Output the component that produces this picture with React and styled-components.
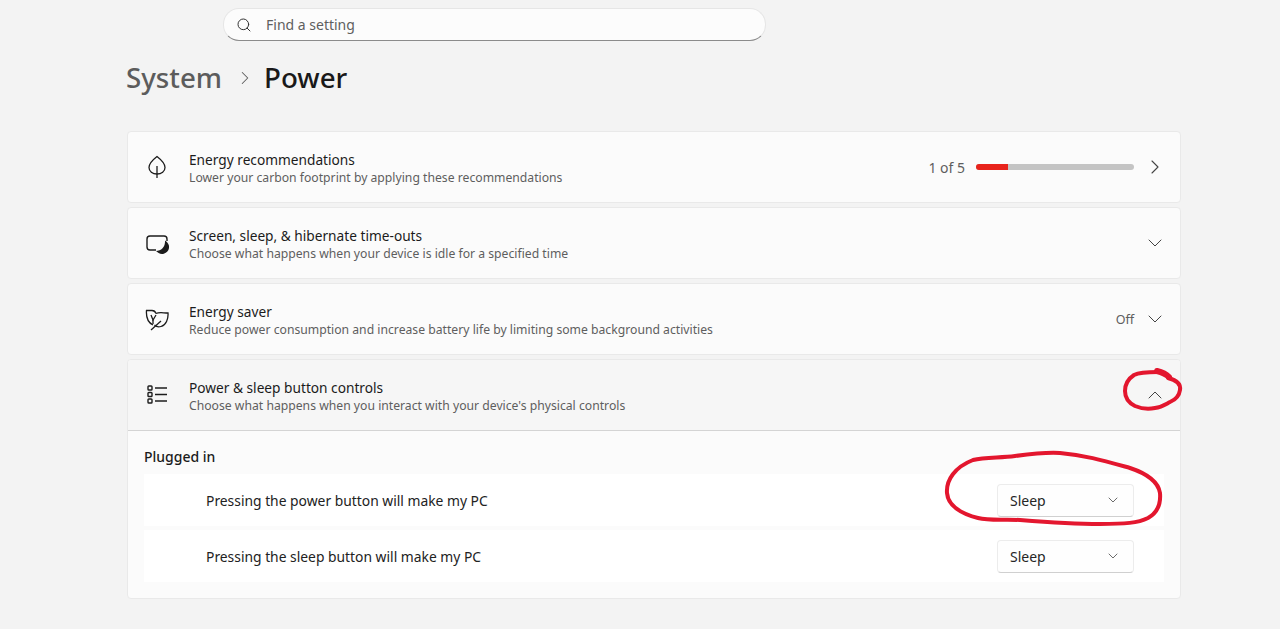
import styled, { createGlobalStyle } from "styled-components";
import { ChevronDown, ChevronRight, ChevronUp, Search } from "lucide-react";

const GlobalStyle = createGlobalStyle`
	html, body {
		margin: 0;
		padding: 0;
		background: #f3f3f3;
	}
	* {
		box-sizing: border-box;
	}
`;

const Page = styled.div`
	position: relative;
	width: 1280px;
	height: 629px;
	overflow: hidden;
	padding: 8px 99px 0 127px;
	background: #f3f3f3;
	font-family: "Noto Sans", "Open Sans", sans-serif;
	color: #1b1b1b;
`;

const SearchBar = styled.div`
	display: flex;
	align-items: center;
	gap: 14px;
	width: 543px;
	height: 33px;
	margin-left: 96px;
	padding-left: 12px;
	background: #fcfcfc;
	border: 1px solid #e6e6e6;
	border-bottom: 1px solid #8b8b8b;
	border-radius: 16px;
	font-size: 14px;
	color: #5f5f5f;
`;

const Breadcrumb = styled.div`
	display: flex;
	align-items: center;
	height: 38px;
	margin-top: 17px;
	margin-left: -1px;
	font-size: 27.7px;
	font-weight: 500;
`;

const Parent = styled.span`
	color: #5c5c5c;
`;

const Current = styled.span`
	color: #191919;
`;

const Crumb = styled.span`
	display: flex;
	margin: 1px 8px 0 12px;
	color: #5c5c5c;
`;

const List = styled.div`
	display: flex;
	flex-direction: column;
	gap: 4px;
	margin-top: 35px;
`;

const Card = styled.div`
	background: #fbfbfb;
	border: 1px solid #e9e9e9;
	border-radius: 4px;
	overflow: hidden;
`;

const CardHead = styled.div`
	display: flex;
	align-items: center;
	height: ${(p) => (p.$open ? "71px" : "70px")};
	padding: 0 13px 0 17px;
	background: ${(p) => (p.$open ? "#f6f6f6" : "transparent")};
	border-bottom: ${(p) => (p.$open ? "1px solid #d4d4d4" : "none")};
`;

const IconSlot = styled.div`
	display: flex;
	align-items: center;
	justify-content: center;
	width: 24px;
	height: 24px;
	margin-right: 20px;
	color: #1c1c1c;
`;

const Labels = styled.div`
	flex: 1;
	min-width: 0;
	padding-top: 3px;
`;

const Title = styled.div`
	font-size: 13.7px;
	line-height: 18px;
	color: #1b1b1b;
`;

const Subtitle = styled.div`
	font-size: 12.2px;
	line-height: 18px;
	color: #5e5e5e;
`;

const Status = styled.span`
	font-size: 14px;
	color: #5e5e5e;
`;

const SmallStatus = styled(Status)`
	font-size: 12.5px;
	margin-right: 9px;
`;

const Track = styled.div`
	width: 158px;
	height: 6px;
	margin: 0 9px 0 11px;
	border-radius: 3px;
	background: #c4c4c4;
	overflow: hidden;
`;

const Fill = styled.div`
	height: 100%;
	background: #e8231c;
`;

const Arrow = styled.span`
	display: flex;
	width: 24px;
	justify-content: center;
	color: #444;
`;

const Panel = styled.div`
	padding: 16px 16px 16px;
`;

const GroupTitle = styled.div`
	font-size: 14px;
	font-weight: 500;
	line-height: 20px;
	margin-bottom: 7px;
	color: #1b1b1b;
`;

const Rows = styled.div`
	display: flex;
	flex-direction: column;
	gap: 4px;
`;

const Row = styled.div`
	display: flex;
	align-items: center;
	justify-content: space-between;
	height: 52px;
	padding: 0 30px 0 62px;
	background: #ffffff;
	font-size: 13.85px;
	color: #222;
`;

const Select = styled.div`
	display: flex;
	align-items: center;
	justify-content: space-between;
	width: 137px;
	height: 33px;
	padding: 0 12px 0 12px;
	background: #fefefe;
	border: 1px solid #ececec;
	border-bottom-color: #d0d0d0;
	border-radius: 4px;
	font-size: 14px;
	color: #262626;
`;

const Scribble = styled.svg`
	position: absolute;
	top: 0;
	left: 0;
	pointer-events: none;
`;

function LeafIcon() {
	return (
		<svg width="24" height="24" viewBox="0 0 24 24" fill="none" stroke="currentColor" strokeWidth="1.3">
			<path d="M12 1.5 C7.5 5 4 8 4 12.5 C4 16.5 7.5 19 12 19 C16.5 19 20 16.5 20 12.5 C20 8 16.5 5 12 1.5Z" />
			<path d="M12 11 V23" />
		</svg>
	);
}

function ScreenIcon() {
	return (
		<svg width="24" height="24" viewBox="0 0 24 24" fill="none" stroke="currentColor" strokeWidth="1.4" overflow="visible">
			<path d="M11 19 H5 C3 19 2 18 2 16 V8 C2 6 3 5 5 5 H19 C21 5 22 6 22 8 V10" />
			<path
				d="M20 9.5 C23 11.5 24.5 14 24 17 C23.5 20.5 20 23 17 23 C14.5 23 12.5 21.5 11 20 C16 20 20.5 16 20 9.5Z"
				fill="currentColor"
				stroke="none"
			/>
		</svg>
	);
}

function SaverIcon() {
	return (
		<svg width="24" height="24" viewBox="0 0 24 24" fill="none" stroke="currentColor" strokeWidth="1.3">
			<path d="M8 18 C3 15.5 1 10 1.5 3.5 H7 C9 3.5 10.5 5 11 6.5" />
			<path d="M11 6.5 C14 5 18 6 23 6 C23.5 12 21 18 16 19.5 C13 20.5 11 19.5 9.5 18" />
			<path d="M6 23 L16 14" />
			<path d="M6 8 L8 13 L11 8" />
			<path d="M8 13 V17" />
		</svg>
	);
}

function ListIcon() {
	return (
		<svg width="24" height="24" viewBox="0 0 24 24" fill="none" stroke="currentColor" strokeWidth="1.4">
			<rect x="3" y="3" width="4" height="4" rx="0.8" />
			<rect x="3" y="9.5" width="4" height="4" rx="0.8" />
			<rect x="3" y="16" width="4" height="4" rx="0.8" />
			<path d="M10 5 H22" />
			<path d="M10 11.5 H22" />
			<path d="M10 18 H22" />
		</svg>
	);
}

function App() {
	return (
		<Page>
			<GlobalStyle />
			<SearchBar>
				<Search size={16} strokeWidth={1.5} color="#333" />
				Find a setting
			</SearchBar>
			<Breadcrumb>
				<Parent>System</Parent>
				<Crumb>
					<ChevronRight size={22} strokeWidth={1.1} />
				</Crumb>
				<Current>Power</Current>
			</Breadcrumb>
			<List>
				<Card>
					<CardHead>
						<IconSlot>
							<LeafIcon />
						</IconSlot>
						<Labels>
							<Title>Energy recommendations</Title>
							<Subtitle>Lower your carbon footprint by applying these recommendations</Subtitle>
						</Labels>
						<Status>1 of 5</Status>
						<Track>
							<Fill style={{ width: "20%" }} />
						</Track>
						<Arrow>
							<ChevronRight size={24} strokeWidth={1.1} />
						</Arrow>
					</CardHead>
				</Card>
				<Card>
					<CardHead>
						<IconSlot>
							<ScreenIcon />
						</IconSlot>
						<Labels>
							<Title>Screen, sleep, &amp; hibernate time-outs</Title>
							<Subtitle>Choose what happens when your device is idle for a specified time</Subtitle>
						</Labels>
						<Arrow>
							<ChevronDown size={24} strokeWidth={1} />
						</Arrow>
					</CardHead>
				</Card>
				<Card>
					<CardHead>
						<IconSlot>
							<SaverIcon />
						</IconSlot>
						<Labels>
							<Title>Energy saver</Title>
							<Subtitle>
								Reduce power consumption and increase battery life by limiting some background activities
							</Subtitle>
						</Labels>
						<SmallStatus>Off</SmallStatus>
						<Arrow>
							<ChevronDown size={24} strokeWidth={1} />
						</Arrow>
					</CardHead>
				</Card>
				<Card>
					<CardHead $open>
						<IconSlot>
							<ListIcon />
						</IconSlot>
						<Labels>
							<Title>Power &amp; sleep button controls</Title>
							<Subtitle>Choose what happens when you interact with your device's physical controls</Subtitle>
						</Labels>
						<Arrow>
							<ChevronUp size={24} strokeWidth={1} />
						</Arrow>
					</CardHead>
					<Panel>
						<GroupTitle>Plugged in</GroupTitle>
						<Rows>
							<Row>
								Pressing the power button will make my PC
								<Select>
									Sleep
									<ChevronDown size={16} strokeWidth={1.3} color="#555" />
								</Select>
							</Row>
							<Row>
								Pressing the sleep button will make my PC
								<Select>
									Sleep
									<ChevronDown size={16} strokeWidth={1.3} color="#555" />
								</Select>
							</Row>
						</Rows>
					</Panel>
				</Card>
			</List>
			<Scribble width="1280" height="629" viewBox="0 0 1280 629" fill="none" stroke="#e3162e" strokeWidth="4" strokeLinecap="round" strokeLinejoin="round">
				<path d="M1158 372 C1150 372 1140 372 1134 375 C1128 379 1125 385 1125 391 C1125 398 1129 403 1135 406 C1142 409 1150 409 1155 408 C1162 407 1166 404 1170 402 C1175 400 1179 397 1180 390 C1181 384 1176 380 1168 378" />
				<path d="M1157 371 C1161 372 1166 374 1169 377" strokeWidth="6" />
				<path d="M973 460 C985 457 1000 458 1015 456 C1030 454 1045 452 1060 453 C1085 455 1105 461 1130 468 C1145 473 1158 480 1160 493 C1161 505 1157 513 1148 518 C1138 523 1125 524 1100 524 C1075 524 1045 522 1020 520 C1005 519 990 521 978 518 C962 514 948 506 947 493 C946 480 955 467 973 460Z" />
			</Scribble>
		</Page>
	);
}

export default App;
